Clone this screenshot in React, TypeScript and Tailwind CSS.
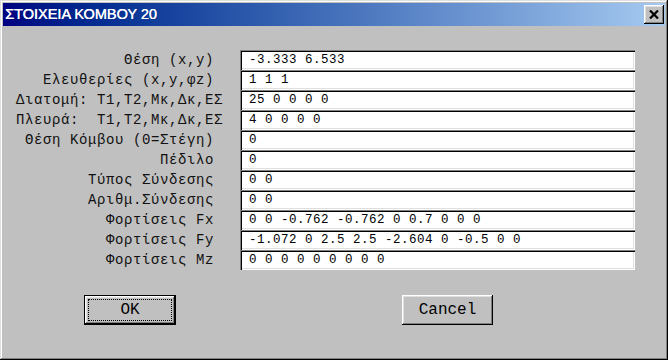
import React from "react";

const rows: [string, string][] = [
  ["Θέση (x,y) ", "-3.333 6.533"],
  ["Ελευθερίες (x,y,φz) ", "1 1 1"],
  ["Διατομή: Τ1,Τ2,Μκ,Δκ,ΕΣ", "25 0 0 0 0"],
  ["Πλευρά:  Τ1,Τ2,Μκ,Δκ,ΕΣ", "4 0 0 0 0"],
  ["Θέση Κόμβου (0=Στέγη) ", "0"],
  ["Πέδιλο ", "0"],
  ["Τύπος Σύνδεσης ", "0 0"],
  ["Αριθμ.Σύνδεσης ", "0 0"],
  ["Φορτίσεις Fx ", "0 0 -0.762 -0.762 0 0.7 0 0 0"],
  ["Φορτίσεις Fy ", "-1.072 0 2.5 2.5 -2.604 0 -0.5 0 0"],
  ["Φορτίσεις Mz ", "0 0 0 0 0 0 0 0 0"],
];

const mono = { fontFamily: '"Liberation Mono", "DejaVu Sans Mono", monospace' };

export default function App() {
  return (
    <div
      className="w-[668px] h-[360px] bg-[#c0c0c0] p-[3px] flex flex-col shadow-[inset_-1px_-1px_0_#000,inset_1px_1px_0_#dfdfdf,inset_-2px_-2px_0_#808080,inset_2px_2px_0_#fff]"
    >
      <div className="h-[23px] flex items-center bg-gradient-to-r from-[#000080] to-[#a6caf0] pl-[2px] pr-[1px]">
        <span
          className="text-white text-[14.5px] leading-none [text-shadow:0.4px_0_0_#fff]"
          style={{ fontFamily: '"Liberation Sans", Arial, sans-serif' }}
        >
          ΣΤΟΙΧΕΙΑ ΚΟΜΒΟΥ 20
        </span>
        <div className="ml-auto w-[20px] h-[19px] bg-[#c0c0c0] flex items-center justify-center shadow-[inset_-1px_-1px_0_#000,inset_1px_1px_0_#fff,inset_-2px_-2px_0_#808080,inset_2px_2px_0_#dfdfdf]">
          <svg width="10" height="9" viewBox="0 0 10 9">
            <path d="M1 0.5 L9 8.5 M9 0.5 L1 8.5" stroke="#000" strokeWidth="2.2" />
          </svg>
        </div>
      </div>

      <div className="pt-[24px] flex flex-col">
        {rows.map(([label, value], i) => (
          <div key={i} className="flex h-[20px]">
            <div
              className="w-[237px] pr-[17px] text-right text-[#111] text-[14px] tracking-[0.6px] leading-[20px] whitespace-pre"
              style={mono}
            >
              {label}
            </div>
            <div
              className="w-[395px] h-[20px] bg-white pl-[9px] text-black text-[12.5px] tracking-[0.5px] leading-[20px] whitespace-pre shadow-[inset_1px_1px_0_#808080,inset_2px_2px_0_#000,inset_-1px_-1px_0_#fff,inset_-2px_-2px_0_#dfdfdf]"
              style={mono}
            >
              {value}
            </div>
          </div>
        ))}
      </div>

      <div className="flex pt-[25px]">
        <div className="ml-[81px] w-[92px] h-[30px] border border-black">
          <div className="w-full h-full bg-[#c0c0c0] p-[3px] shadow-[inset_-1px_-1px_0_#000,inset_1px_1px_0_#fff,inset_-2px_-2px_0_#808080,inset_2px_2px_0_#dfdfdf]">
            <div
              className="w-full h-full border border-dotted border-black flex items-center justify-center text-black text-[16px] leading-none"
              style={mono}
            >
              OK
            </div>
          </div>
        </div>
        <div
          className="ml-[226px] w-[91px] h-[30px] bg-[#c0c0c0] flex items-center justify-center text-black text-[16px] leading-none shadow-[inset_-1px_-1px_0_#000,inset_1px_1px_0_#fff,inset_-2px_-2px_0_#808080,inset_2px_2px_0_#dfdfdf]"
          style={mono}
        >
          Cancel
        </div>
      </div>
    </div>
  );
}
